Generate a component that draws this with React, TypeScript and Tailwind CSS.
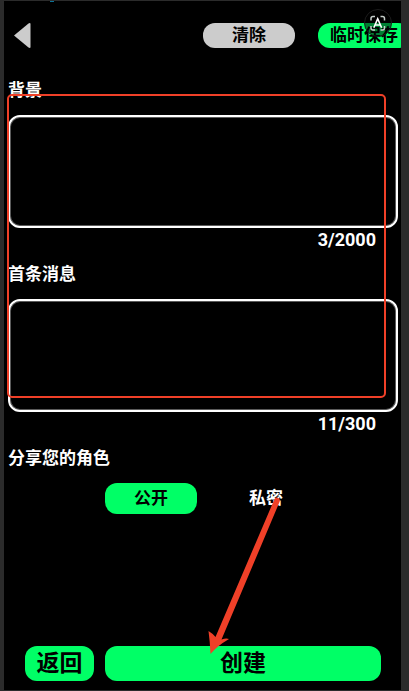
import { useState } from "react"

interface TextFieldProps {
  id: string
  label: string
  count: string
}

function TextField({ id, label, count }: TextFieldProps) {
  return (
    <div className="pl-1 pr-[3px]">
      <label htmlFor={id} className="block h-6 leading-6">
        {label}
      </label>
      <textarea
        id={id}
        className="mt-[13px] block h-[113px] w-full resize-none rounded-xl border-2 border-white bg-black p-3 shadow-[inset_0_0_0_1px_#5a5a5a] outline-none"
      />
      <p className="h-6 pr-[22px] text-right text-lg leading-6">{count}</p>
    </div>
  )
}

function ScanBadge() {
  return (
    <svg viewBox="0 0 28 28" className="absolute top-2 right-[9px] h-7 w-7" fill="none" aria-hidden="true">
      <circle cx="14" cy="14" r="13.5" fill="#000" fillOpacity="0.5" stroke="#1c1c1c" />
      <path
        d="M7 11.500V9.500a2 2 0 0 1 2-2H11M16.500 7.500h2a2 2 0 0 1 2 2V11.500M20.500 17v2a2 2 0 0 1-2 2H16.500M11 21H9a2 2 0 0 1-2-2V17"
        stroke="#c4ccc8"
        strokeWidth="1.500"
      />
      <path d="M9.800 18.800 13.700 9.800l3.900 9M11.200 16h5" stroke="#fff" strokeWidth="1.600" />
    </svg>
  )
}

const options = [
  { value: "public", label: "公开" },
  { value: "private", label: "私密" },
]

export default function App() {
  const [visibility, setVisibility] = useState("public")

  return (
    <div className="flex min-h-screen bg-[#2b2b2b] pt-px pr-2 pb-px pl-1 font-['Roboto','Noto_Sans_CJK_SC',sans-serif] text-[17px] font-bold text-white">
      <main className="relative flex min-w-0 flex-1 flex-col overflow-hidden bg-black">
        <div className="absolute top-0 left-[46px] h-px w-1 bg-[#0b7296]" />

        <header className="flex items-center pt-[22px] pl-[10px]">
          <button type="button" aria-label="后退">
            <svg viewBox="0 0 17 25" className="h-[25px] w-[17px]" aria-hidden="true">
              <path d="M0 12.500 14.500 0.500Q16.500 -0.500 16.500 1V24Q16.500 25.500 14.500 24.500Z" fill="#ccc" />
            </svg>
          </button>
          <div className="-mr-[9px] ml-auto flex gap-[23px] text-black">
            <button type="button" className="h-[25px] w-[92px] rounded-xl bg-[#ccc] leading-[25px]">
              清除
            </button>
            <button type="button" className="h-[25px] w-[92px] rounded-xl bg-[#00ff66] leading-[25px]">
              临时保存
            </button>
          </div>
        </header>

        <form className="flex flex-1 flex-col pt-[30px]">
          <div className="flex flex-col gap-[10px]">
            <TextField id="background" label="背景" count="3/2000" />
            <TextField id="first-message" label="首条消息" count="11/300" />
          </div>

          <fieldset className="pt-[10px]">
            <legend className="contents">
              <span className="block pl-1 leading-6">分享您的角色</span>
            </legend>
            <div className="mt-[13px] flex justify-center gap-[23px] pl-[12px]">
              {options.map((option) => (
                <label
                  key={option.value}
                  className="flex h-[31px] w-[92px] cursor-pointer items-center justify-center rounded-xl has-checked:bg-[#00ff66] has-checked:text-black"
                >
                  <input
                    type="radio"
                    name="visibility"
                    value={option.value}
                    checked={visibility === option.value}
                    onChange={() => setVisibility(option.value)}
                    className="sr-only"
                  />
                  {option.label}
                </label>
              ))}
            </div>
          </fieldset>

          <div className="mt-auto flex gap-[11px] pr-5 pb-[9px] pl-[21px] text-[23px] text-black">
            <button type="button" className="h-[35px] w-[69px] rounded-xl bg-[#00ff66] leading-[35px]">
              返回
            </button>
            <button type="button" className="h-[35px] flex-1 rounded-xl bg-[#00ff66] leading-[35px]">
              创建
            </button>
          </div>
        </form>

        <ScanBadge />

        {/* Highlight around both text fields */}
        <div className="pointer-events-none absolute top-[93px] right-[15px] left-[3px] h-[304px] rounded-[5px] border-2 border-[#f04028]" />

        {/* Arrow pointing at the create button */}
        <svg
          viewBox="0 0 80 160"
          className="pointer-events-none absolute bottom-[34px] left-1/2 h-[160px] w-20"
          fill="#f04028"
          aria-hidden="true"
        >
          <path d="M71.500 3Q73 0.500 76 2.500Q77.500 4 76.500 6L18.500 143.500Q23 142 26 143Q14 150 7.500 158Q7 146 5.500 135Q9 137 12.500 141Z" />
        </svg>
      </main>
    </div>
  )
}
